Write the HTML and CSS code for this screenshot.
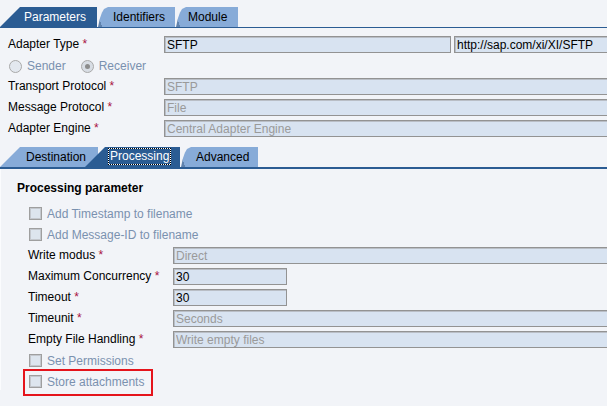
FILE: index.html
```html
<!DOCTYPE html>
<html lang="en">
<head>
    <meta charset="UTF-8">
    <title>Communication Channel - SFTP</title>
    <link rel="stylesheet" href="styles.css">
</head>
<body>
    <!-- Main tabs -->
    <div class="tabs">
        <div class="tab first active tab-params">Parameters</div>
        <div class="tab tab-ids">Identifiers</div>
        <div class="tab tab-module">Module</div>
    </div>

    <div class="fields head-fields">
        <label class="field-label">Adapter Type <span class="req">*</span></label>
        <div class="pair">
            <input class="input type-input" type="text" value="SFTP" readonly>
            <input class="input" type="text" value="http://sap.com/xi/XI/SFTP" readonly>
        </div>

        <div class="radios">
            <span class="radio-item"><span class="radio"></span>Sender</span>
            <span class="radio-item"><span class="radio checked"></span>Receiver</span>
        </div>

        <label class="field-label">Transport Protocol <span class="req">*</span></label>
        <input class="input off" type="text" value="SFTP" readonly>

        <label class="field-label">Message Protocol <span class="req">*</span></label>
        <input class="input off" type="text" value="File" readonly>

        <label class="field-label">Adapter Engine <span class="req">*</span></label>
        <input class="input off" type="text" value="Central Adapter Engine" readonly>
    </div>

    <!-- Sub tabs -->
    <div class="tabs sub-tabs">
        <div class="tab first tab-dest">Destination</div>
        <div class="tab active tab-proc"><span class="focus">Processing</span></div>
        <div class="tab tab-adv">Advanced</div>
    </div>

    <div class="panel">
        <h3 class="panel-title">Processing parameter</h3>

        <div class="fields proc-fields">
            <div class="check-row"><span class="check"></span>Add Timestamp to filename</div>
            <div class="check-row"><span class="check"></span>Add Message-ID to filename</div>

            <label class="field-label">Write modus <span class="req">*</span></label>
            <input class="input off" type="text" value="Direct" readonly>

            <label class="field-label">Maximum Concurrency <span class="req">*</span></label>
            <input class="input short" type="text" value="30" readonly>

            <label class="field-label">Timeout <span class="req">*</span></label>
            <input class="input short" type="text" value="30" readonly>

            <label class="field-label">Timeunit <span class="req">*</span></label>
            <input class="input off" type="text" value="Seconds" readonly>

            <label class="field-label">Empty File Handling <span class="req">*</span></label>
            <input class="input off" type="text" value="Write empty files" readonly>

            <div class="check-row"><span class="check"></span>Set Permissions</div>
            <div class="check-row marked"><span class="check"></span>Store attachments</div>
        </div>
    </div>
</body>
</html>
```

FILE: styles.css
```css
* {
    margin: 0;
    padding: 0;
    box-sizing: border-box;
}

html {
    background: #f2f4f8;
}

body {
    font-family: 'Liberation Sans', Arial, sans-serif;
    font-size: 12px;
    color: #000;
    background: #f2f4f8;
    min-height: 100vh;
    padding-bottom: 20px;
    overflow-x: hidden;
}

/* Tabs */
.tabs {
    display: flex;
    height: 21px;
    margin-top: 7px;
    border-bottom: 1px solid #2b5c93;
}

.sub-tabs {
    height: 22px;
    margin-top: 10px;
    border-bottom-width: 2px;
}

.tab {
    height: 20px;
    line-height: 20px;
    padding: 0 10px 0 15px;
    margin-left: 1px;
    background: linear-gradient(70deg, #5f82ad 0 4px, #87abd8 4px);
    clip-path: polygon(0 100%, 2px 55%, 4px 28%, 6px 10%, 10px 0, 100% 0, 100% 100%);
    white-space: nowrap;
}

.tab.first {
    margin-left: 0;
    background: #87abd8;
    clip-path: polygon(0 100%, 20px 0, 100% 0, 100% 100%);
}

.tab.active {
    background: #2b5c93;
    color: #fff;
    clip-path: polygon(0 100%, 20px 0, 100% 0, 100% 100%);
    z-index: 1;
}

.tab-params {
    width: 97px;
    padding-left: 24px;
}

.tab-ids {
    width: 77px;
}

.tab-module {
    width: 62px;
    padding-left: 12px;
}

.tab-dest {
    width: 98px;
    padding-left: 26px;
}

.tab-proc {
    width: 95px;
    margin-left: -13px;
    padding: 1px 0 0 23px;
    line-height: 14px;
}

.tab-adv {
    width: 77px;
}

.focus {
    display: inline-block;
    padding: 0 1px 0 1px;
    height: 17px;
    line-height: 15px;
    border: 1px solid #fff;
    outline: 1px dotted #000;
    outline-offset: -1px;
}

/* Field grids */
.fields {
    display: grid;
    row-gap: 4px;
    align-items: center;
    margin-right: -12px;
}

.head-fields {
    grid-template-columns: 156px 1fr;
    margin-top: 8px;
    padding-left: 8px;
}

.proc-fields {
    grid-template-columns: 145px 1fr;
    padding-left: 27px;
}

.field-label {
    height: 17px;
    line-height: 17px;
    white-space: nowrap;
}

.req {
    color: #a8123f;
}

.pair {
    display: grid;
    grid-template-columns: 287px 1fr;
    column-gap: 3px;
}

.input {
    display: block;
    width: 100%;
    height: 17px;
    padding: 0 2px;
    font-family: inherit;
    font-size: 12px;
    color: #000;
    background: #d8e3f1;
    border: 1px solid #939393;
    box-shadow: inset 1px 1px 0 #b9bec6;
    outline: none;
}

.input.off {
    color: #9a9a9a;
}

.input.short {
    width: 114px;
}

/* Radios */
.radios {
    grid-column: 1 / -1;
    display: flex;
    gap: 14px;
    height: 17px;
    align-items: center;
    padding-top: 1px;
    color: #7a91af;
}

.radio-item {
    display: flex;
    align-items: center;
    gap: 5px;
}

.radio {
    position: relative;
    display: inline-block;
    width: 13px;
    height: 13px;
    margin-left: 1px;
    border-radius: 50%;
    border: 1px solid #a9a9a9;
    background: #e3e8ef;
}

.radio.checked {
    background: #d8dde4;
}

.radio.checked::after {
    content: "";
    position: absolute;
    left: 3px;
    top: 3px;
    width: 5px;
    height: 5px;
    border-radius: 50%;
    background: #8c8c8c;
}

/* Processing panel */
.panel {
    padding-top: 12px;
    border-left: 1px solid #fbfcfe;
}

.panel-title {
    padding-left: 16px;
    margin-bottom: 10px;
    font-size: 12px;
    line-height: 14px;
    font-weight: bold;
}

.check-row {
    grid-column: 1 / -1;
    justify-self: start;
    position: relative;
    display: flex;
    align-items: center;
    gap: 5px;
    height: 17px;
    padding-left: 1px;
    color: #7a91af;
}

.check {
    display: inline-block;
    width: 13px;
    height: 13px;
    border: 1px solid #9f9f9f;
    box-shadow: inset 0 0 0 1px #c4c8ce;
    background: #dde5ee;
}

/* annotation box around the last option */
.check-row.marked::after {
    content: "";
    position: absolute;
    left: -5px;
    right: -9px;
    top: -4px;
    bottom: -6px;
    border: 2px solid #e5141c;
}
```
